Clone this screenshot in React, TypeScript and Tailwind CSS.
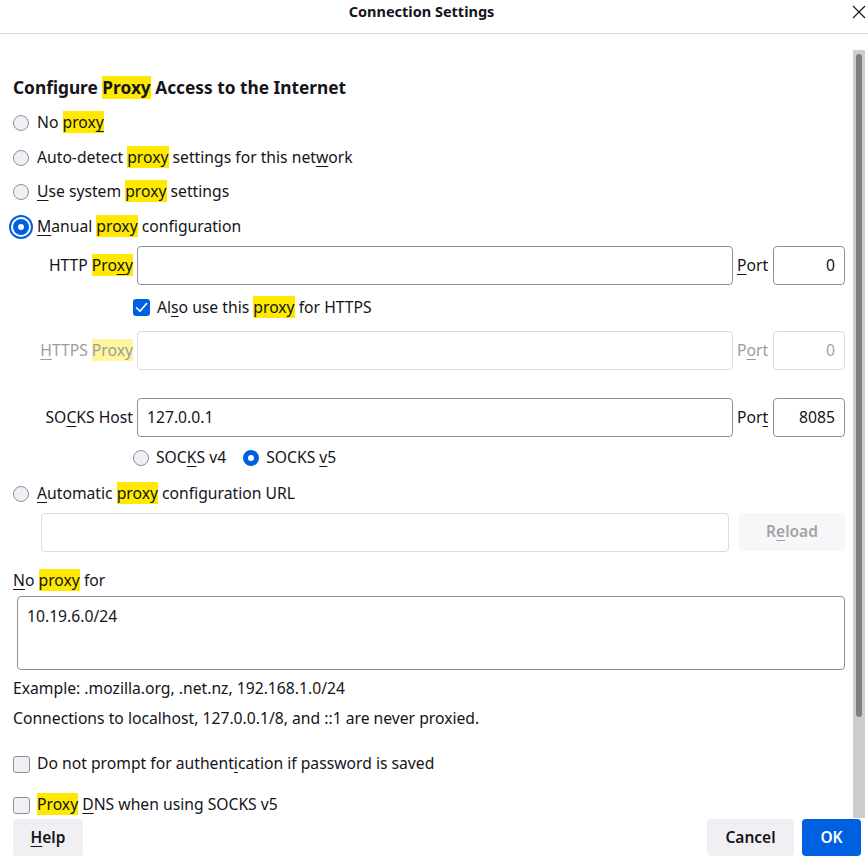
import type { ReactNode } from 'react'

const Hl = ({ children, dim }: { children: ReactNode; dim?: boolean }) => (
  <span className={dim ? 'bg-[#fff59e]' : 'bg-[#ffe900]'}>{children}</span>
)

const U = ({ children }: { children: ReactNode }) => (
  <span className="underline decoration-1 underline-offset-[3px]">{children}</span>
)

function Radio({ checked, focus }: { checked?: boolean; focus?: boolean }) {
  return (
    <span
      className={`box-border block h-4 w-4 shrink-0 rounded-full ${
        checked ? 'border-[5px] border-[#0061e0] bg-white' : 'border border-[#8f8f9d] bg-[#f0f0f4]'
      } ${focus ? 'outline-2 outline-offset-2 outline-[#0061e0]' : ''}`}
    />
  )
}

function Check({ checked }: { checked?: boolean }) {
  if (!checked) {
    return <span className="box-border block h-[17px] w-[17px] shrink-0 rounded-[3px] border border-[#8f8f9d] bg-[#f0f0f4]" />
  }
  return (
    <span className="flex h-[17px] w-[17px] shrink-0 items-center justify-center rounded-[3px] bg-[#0061e0]">
      <svg width="17" height="17" viewBox="0 0 17 17" fill="none">
        <path d="M3.5 8.8 L7 12.2 L13.6 4.6" stroke="white" strokeWidth="1.6" strokeLinecap="round" strokeLinejoin="round" />
      </svg>
    </span>
  )
}

function Field({ value, disabled, right }: { value?: string; disabled?: boolean; right?: boolean }) {
  return (
    <div
      className={`box-border flex h-[39px] items-center rounded-[4px] border px-[9px] ${
        disabled ? 'border-[#dcdce0] text-[#a3a3a6]' : 'border-[#8f8f9d] text-[#15141a]'
      } ${right ? 'justify-end' : ''}`}
    >
      {value}
    </div>
  )
}

function ProxyRow({
  label,
  value,
  port,
  portLabel,
  disabled,
}: {
  label: ReactNode
  value?: string
  port: string
  portLabel: ReactNode
  disabled?: boolean
}) {
  return (
    <div className={`flex h-[39px] items-center ${disabled ? 'text-[#9d9da1]' : ''}`}>
      <div className="w-[120px] shrink-0 whitespace-nowrap text-right">{label}</div>
      <div className="ml-[4px] flex-1">
        <Field value={value} disabled={disabled} />
      </div>
      <div className="w-[40px] shrink-0 pl-[4px]">{portLabel}</div>
      <div className="w-[72px] shrink-0">
        <Field value={port} disabled={disabled} right />
      </div>
    </div>
  )
}

export default function App() {
  return (
    <div className="flex h-[864px] w-[868px] flex-col overflow-hidden bg-white font-['Noto_Sans',sans-serif] text-[15.7px] text-[#15141a]">
      {/* Title bar */}
      <div className="relative flex h-[34px] shrink-0 items-center justify-center border-b border-[#d9d9d9]">
        <span className="-mt-[9px] mr-[25px] text-[14.5px] font-bold">Connection Settings</span>
        <svg className="absolute right-[2px] top-[5px]" width="14" height="14" viewBox="0 0 14 14">
          <path d="M1 1 L13 13 M13 1 L1 13" stroke="#15141a" strokeWidth="1.1" />
        </svg>
      </div>

      <div className="flex min-h-0 flex-1">
        {/* Content */}
        <div className="flex w-[853px] shrink-0 flex-col pl-[13px] pr-[8px] pt-[40px]">
          <div className="flex h-[28px] items-center text-[17.3px] font-bold">
            <span>
              Configure <Hl>Proxy</Hl> Access to the Internet
            </span>
          </div>

          <div className="mt-[4px] flex flex-col">
            <label className="flex h-[34.5px] items-center gap-[8px]">
              <Radio />
              <span>
                No <Hl>prox<U>y</U></Hl>
              </span>
            </label>
            <label className="flex h-[34.5px] items-center gap-[8px]">
              <Radio />
              <span>
                Auto-detect <Hl>proxy</Hl> settings for this net<U>w</U>ork
              </span>
            </label>
            <label className="flex h-[34.5px] items-center gap-[8px]">
              <Radio />
              <span>
                <U>U</U>se system <Hl>proxy</Hl> settings
              </span>
            </label>
            <label className="flex h-[34.5px] items-center gap-[8px]">
              <Radio checked focus />
              <span>
                <U>M</U>anual <Hl>proxy</Hl> configuration
              </span>
            </label>
          </div>

          <div className="mt-[2px]">
            <ProxyRow
              label={
                <>
                  HTTP <Hl>Pro<U>x</U>y</Hl>
                </>
              }
              port="0"
              portLabel={<><U>P</U>ort</>}
            />
          </div>

          <div className="flex h-[46px] items-center gap-[7px] pl-[120px]">
            <Check checked />
            <span>
              Al<U>s</U>o use this <Hl>proxy</Hl> for HTTPS
            </span>
          </div>

          <ProxyRow
            disabled
            label={
              <>
                <U>H</U>TTPS <Hl dim>Proxy</Hl>
              </>
            }
            port="0"
            portLabel={<>P<U>o</U>rt</>}
          />

          <div className="mt-[28px]">
            <ProxyRow
              label={
                <>
                  SO<U>C</U>KS Host
                </>
              }
              value="127.0.0.1"
              port="8085"
              portLabel={<>Por<U>t</U></>}
            />
          </div>

          <div className="flex h-[42px] items-center pl-[120px]">
            <label className="flex items-center gap-[7px]">
              <Radio />
              <span>
                SOC<U>K</U>S v4
              </span>
            </label>
            <label className="ml-[17px] flex items-center gap-[7px]">
              <Radio checked />
              <span>
                SOCKS <U>v</U>5
              </span>
            </label>
          </div>

          <label className="flex h-[30px] items-center gap-[8px]">
            <Radio />
            <span>
              <U>A</U>utomatic <Hl>proxy</Hl> configuration URL
            </span>
          </label>

          <div className="mt-[4px] flex items-center pl-[28px]">
            <div className="box-border h-[39px] flex-1 rounded-[4px] border border-[#dcdce0]" />
            <button className="ml-[10px] h-[38px] w-[106px] rounded-[4px] bg-[#f7f7f9] text-[15.5px] font-semibold text-[#a3a3a6]">
              R<U>e</U>load
            </button>
          </div>

          <div className="mt-[15px] flex h-[28px] items-center">
            <span>
              <U>N</U>o <Hl>proxy</Hl> for
            </span>
          </div>

          <div className="ml-[4px] mt-[2px] box-border h-[74px] rounded-[4px] border border-[#8f8f9d] px-[9px] pt-[8px]">
            10.19.6.0/24
          </div>

          <div className="mt-[6px] flex h-[26px] items-center">Example: .mozilla.org, .net.nz, 192.168.1.0/24</div>
          <div className="mt-[4px] flex h-[26px] items-center">
            Connections to localhost, 127.0.0.1/8, and ::1 are never proxied.
          </div>

          <label className="mt-[19px] flex h-[26px] items-center gap-[7px]">
            <Check />
            <span>
              Do not prompt for authent<U>i</U>cation if password is saved
            </span>
          </label>
          <label className="mt-[15px] flex h-[26px] items-center gap-[7px]">
            <Check />
            <span>
              <Hl>Proxy</Hl> <U>D</U>NS when using SOCKS v5
            </span>
          </label>
        </div>

        {/* Scrollbar */}
        <div className="mt-[16px] flex w-[12px] shrink-0 justify-center bg-[#cdcdcd] pt-[4px]">
          <div className="h-[663px] w-[6px] rounded-full bg-[#7f7f7f]" />
        </div>
      </div>

      {/* Button bar */}
      <div className="flex h-[46px] shrink-0 items-start pl-[13px] pr-[7px] pt-[1px]">
        <button className="h-[37px] w-[70px] rounded-[4px] bg-[#f0f0f4] text-[15.5px] font-semibold">
          <U>H</U>elp
        </button>
        <div className="flex-1" />
        <button className="h-[37px] w-[87px] rounded-[4px] bg-[#f0f0f4] text-[15.5px] font-semibold">Cancel</button>
        <button className="ml-[8px] h-[37px] w-[59px] rounded-[4px] bg-[#0061e0] text-[15.5px] font-semibold text-white">
          OK
        </button>
      </div>
    </div>
  )
}
